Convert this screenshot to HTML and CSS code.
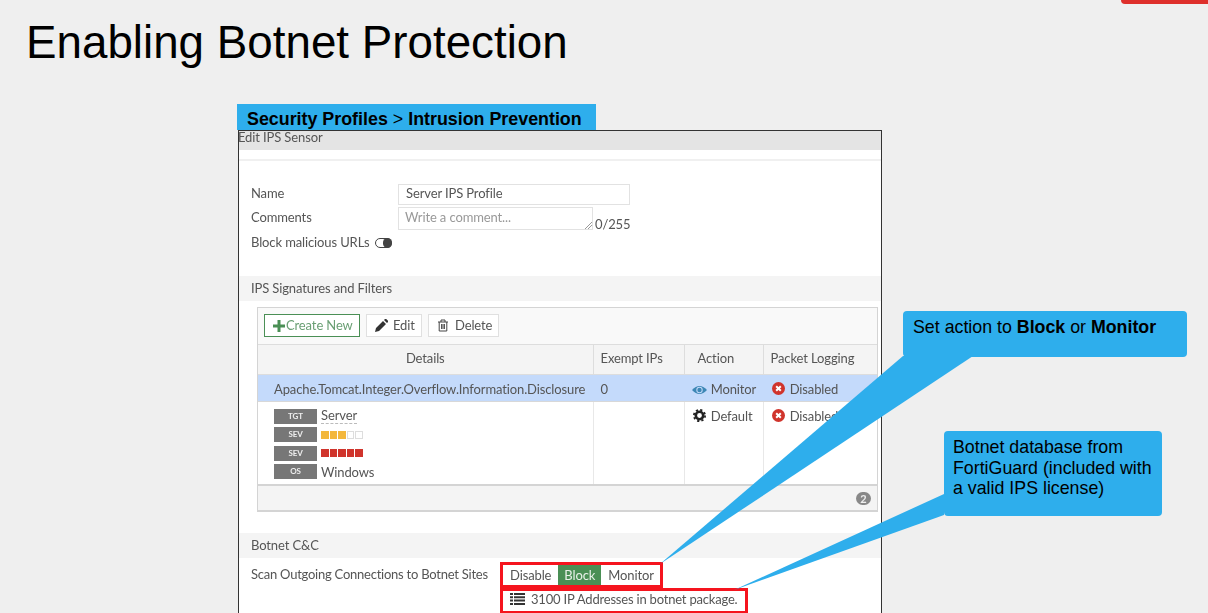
FILE: index.html
```html
<!DOCTYPE html>
<html lang="en">
<head>
  <meta charset="UTF-8">
  <meta name="viewport" content="width=device-width, initial-scale=1.0">
  <title>Enabling Botnet Protection</title>
  <link rel="stylesheet" href="styles.css">
</head>
<body>
  <div class="slide">
    <div class="corner-tab"></div>
    <h1 class="slide-title">Enabling Botnet Protection</h1>
    <div class="path-tab"><b>Security Profiles</b> &gt; <b>Intrusion Prevention</b></div>

    <div class="window">
      <div class="window-head">Edit IPS Sensor</div>
      <div class="window-rule"></div>

      <div class="fields">
        <label class="field-label">Name</label>
        <div class="name-input">Server IPS Profile</div>
        <label class="field-label">Comments</label>
        <div class="comment-row">
          <div class="comment-input">Write a comment...
            <svg class="grip" width="8" height="8" viewBox="0 0 8 8"><path d="M1 8L8 1M4 8L8 4" stroke="#999" fill="none"/></svg>
          </div>
          <span class="counter">0/255</span>
        </div>
        <div class="toggle-row">
          <span>Block malicious URLs</span>
          <span class="toggle"><span class="toggle-knob"></span></span>
        </div>
      </div>

      <div class="section">IPS Signatures and Filters</div>

      <div class="panel">
        <div class="toolbar">
          <span class="btn btn-create">
            <svg width="12" height="12" viewBox="0 0 12 12"><path d="M4.500 0h3v4.500H12v3H7.500V12h-3V7.500H0v-3h4.500z" fill="#4a8f55"/></svg>
            Create New
          </span>
          <span class="btn btn-edit">
            <svg width="13" height="13" viewBox="0 0 13 13"><path d="M0 13l1-4 7-7 3 3-7 7zM9 1l1-1q.6-.4 1.200 0l1.800 1.800q.4.6 0 1.200l-1 1z" fill="#333"/></svg>
            Edit
          </span>
          <span class="btn btn-delete">
            <svg width="12" height="13" viewBox="0 0 12 13"><path d="M1 3h10M4 3V1h4v2M2.200 3v9h7.600V3M4.600 5v5M6 5v5M7.400 5v5" stroke="#444" fill="none"/></svg>
            Delete
          </span>
        </div>

        <table class="sensors">
          <thead>
            <tr>
              <th class="col-details">Details</th>
              <th class="col-exempt">Exempt IPs</th>
              <th class="col-action">Action</th>
              <th class="col-log">Packet Logging</th>
            </tr>
          </thead>
          <tbody>
            <tr class="selected">
              <td class="sig-name">Apache.Tomcat.Integer.Overflow.Information.Disclosure</td>
              <td>0</td>
              <td>
                <svg class="ico" width="15" height="10" viewBox="0 0 15 10"><path d="M0 5Q7.500-3 15 5Q7.500 13 0 5z" fill="#3d87b5"/><circle cx="7.500" cy="5" r="3.200" fill="#c4dafb"/><circle cx="7.500" cy="5" r="2.200" fill="#3d87b5"/></svg>
                Monitor
              </td>
              <td class="log-cell">
                <svg class="ico" width="13" height="13" viewBox="0 0 13 13"><circle cx="6.500" cy="6.500" r="6.500" fill="#d0342c"/><path d="M4.200 4.200l4.600 4.600M8.800 4.200l-4.600 4.600" stroke="#fff" stroke-width="2"/></svg>
                Disabled
              </td>
            </tr>
            <tr class="detail">
              <td>
                <div class="tag-row"><span class="tag">TGT</span><span class="dotted">Server</span></div>
                <div class="tag-row">
                  <span class="tag">SEV</span>
                  <span class="sev sev-amber"><i></i><i></i><i></i><i class="off"></i><i class="off"></i></span>
                </div>
                <div class="tag-row">
                  <span class="tag">SEV</span>
                  <span class="sev sev-red"><i></i><i></i><i></i><i></i><i></i></span>
                </div>
                <div class="tag-row"><span class="tag">OS</span><span>Windows</span></div>
              </td>
              <td></td>
              <td class="default-cell">
                <svg class="ico" width="13" height="13" viewBox="0 0 13 13"><circle cx="6.500" cy="6.500" r="3.700" fill="none" stroke="#222" stroke-width="2.600"/><circle cx="6.500" cy="6.500" r="5.600" fill="none" stroke="#222" stroke-width="1.800" stroke-dasharray="2.200 2.200"/></svg>
                Default
              </td>
              <td class="log-cell">
                <svg class="ico" width="13" height="13" viewBox="0 0 13 13"><circle cx="6.500" cy="6.500" r="6.500" fill="#d0342c"/><path d="M4.200 4.200l4.600 4.600M8.800 4.200l-4.600 4.600" stroke="#fff" stroke-width="2"/></svg>
                Disabled
              </td>
            </tr>
          </tbody>
        </table>
        <div class="panel-foot"><span class="count">2</span></div>
      </div>

      <div class="section section-botnet">Botnet C&amp;C</div>

      <div class="botnet-row">
        <span class="botnet-label">Scan Outgoing Connections to Botnet Sites</span>
        <div class="botnet-controls">
          <div class="red-box segs">
            <span>Disable</span><span class="seg-on">Block</span><span>Monitor</span>
          </div>
          <div class="red-box package">
            <svg width="15" height="12" viewBox="0 0 15 12"><path d="M0 0h3v2H0zM4 0h11v2H4zM0 3.300h3v2H0zM4 3.300h11v2H4zM0 6.600h3v2H0zM4 6.600h11v2H4zM0 10h3v2H0zM4 10h11v2H4z" fill="#333"/></svg>
            3100 IP Addresses in botnet package.
          </div>
        </div>
      </div>
    </div>

    <svg class="tails" width="1208" height="613" viewBox="0 0 1208 613">
      <polygon points="903,356 660,564 973,356" fill="#2eaeec"/>
      <polygon points="944,494 734,590 944,515" fill="#2eaeec"/>
    </svg>
    <div class="callout callout-action">Set action to <b>Block</b> or <b>Monitor</b></div>
    <div class="callout callout-db">Botnet database from FortiGuard (included with a valid IPS license)</div>
  </div>
</body>
</html>
```

FILE: styles.css
```css
body {
  margin: 0;
  background-color: #efefef;
  font-family: "Liberation Sans", Arial, sans-serif;
  color: #000;
}
.slide {
  position: relative;
  width: 1208px;
  height: 613px;
  overflow: hidden;
}
.corner-tab {
  height: 4px;
  margin-left: 1121px;
  background: #de2f2b;
  border-bottom-left-radius: 10px;
}
.slide-title {
  margin: 12px 0 0 26px;
  height: 88px;
  font-size: 45.750px;
  font-weight: normal;
  line-height: 53px;
}
.path-tab {
  margin-left: 237px;
  width: 349px;
  height: 26px;
  padding-left: 10px;
  background: #2eaeec;
  font-size: 17.850px;
  line-height: 31px;
}

/* the pasted FortiGate screenshot, soft like the scaled original */
.window {
  margin-left: 238px;
  width: 642px;
  height: 490px;
  border: 1px solid #333;
  border-bottom: none;
  background: #fff;
  font-family: Lato, sans-serif;
  font-size: 13px;
  letter-spacing: -0.12px;
  color: #555;
  filter: blur(0.3px);
}
.window-head {
  height: 19px;
  background: #e4e4e4;
  line-height: 12px;
  text-indent: -1px;
}
.window-rule {
  height: 2px;
  margin-top: 9px;
  background: #f0f0f0;
}
.fields {
  display: grid;
  grid-template-columns: 147px 1fr;
  grid-template-rows: 23px 24px 24px;
  align-items: start;
  padding: 22px 0 0 12px;
  height: 93px;
}
.field-label {
  line-height: 22px;
}
.field-label:first-child {
  line-height: 20px;
}
.name-input {
  width: 223px;
  height: 19px;
  margin-top: 1px;
  padding-left: 7px;
  border: 1px solid #e2e2e2;
  line-height: 17px;
}
.comment-row {
  display: flex;
  align-items: flex-end;
  gap: 2px;
}
.comment-input {
  position: relative;
  width: 187px;
  height: 21px;
  margin-top: 1px;
  padding-left: 6px;
  border: 1px solid #e2e2e2;
  line-height: 18px;
  color: #999;
}
.grip {
  position: absolute;
  right: 0;
  bottom: 0;
}
.counter {
  line-height: 12px;
}
.toggle-row {
  grid-column: 1 / 3;
  display: flex;
  align-items: center;
  gap: 5px;
  height: 24px;
}
.toggle {
  display: block;
  width: 17px;
  height: 10px;
  box-sizing: border-box;
  border-radius: 5px;
  background: #fff;
  border: 1px solid #444;
  position: relative;
  top: 1px;
}
.toggle-knob {
  display: block;
  width: 9px;
  height: 10px;
  margin: -1px -1px 0 auto;
  border-radius: 5px;
  background: #444;
}
.section {
  height: 25px;
  padding-left: 12px;
  background: #f4f4f4;
  line-height: 24px;
}
.panel {
  margin: 6px 3px 0 18px;
  border: 1px solid #d4d4d4;
  border-bottom-width: 2px;
}
.toolbar {
  display: flex;
  gap: 6px;
  align-items: flex-start;
  box-sizing: border-box;
  height: 36px;
  padding: 6px 0 0 6px;
  background: #f9f9f9;
}
.btn {
  display: flex;
  align-items: center;
  box-sizing: border-box;
  gap: 6px;
  height: 23px;
  padding: 0 0 2px 8px;
  border: 1px solid #e0e0e0;
  background: #fff;
}
.btn svg {
  margin-top: 2px;
}
.btn-create {
  width: 96px;
  gap: 1px;
  border-color: #4a8f55;
  color: #6a9f74;
}
.btn-edit { width: 56px; gap: 5px; }
.btn-delete { width: 71px; }
.sensors {
  width: 100%;
  table-layout: fixed;
  border-collapse: collapse;
}
.sensors th {
  box-sizing: border-box;
  height: 30px;
  padding: 0 0 4px 7px;
  background: #f4f4f4;
  border: 1px solid #ddd;
  border-left: none;
  font-weight: normal;
  text-align: left;
}
.sensors th:last-child,
.sensors td:last-child {
  border-right: none;
}
.sensors .col-details {
  width: 335px;
  padding-left: 0;
  text-align: center;
}
.col-exempt { width: 91px; }
.col-action { width: 79px; }
.sensors .col-action { padding-left: 13px; }
.sensors td {
  padding: 0 0 0 7px;
  border-right: 1px solid #e8e8e8;
}
.sensors .selected td {
  height: 24px;
  padding-top: 2px;
  background: #c4dafb;
  border-bottom: 1px solid #d8d8d8;
  border-right-color: #c4dafb;
}
.sensors .selected .sig-name {
  padding-left: 16px;
  white-space: nowrap;
}
.sensors .detail td {
  height: 76px;
  vertical-align: top;
  padding-top: 6px;
}
.sensors .detail td:first-child {
  padding: 5px 0 0 16px;
}
.sensors .selected .log-cell,
.sensors .detail .log-cell {
  padding-left: 8px;
}
.log-cell .ico {
  margin-right: 2px;
}
.sensors .detail .default-cell {
  padding-left: 8px;
}
.default-cell .ico {
  margin-right: 2px;
}
.detail {
  border-bottom: 2px solid #d4d4d4;
}
.ico {
  margin-right: 1px;
  vertical-align: -1px;
}
.tag-row {
  display: flex;
  align-items: center;
  gap: 4px;
  height: 18.500px;
}
.tag {
  width: 43px;
  height: 15px;
  background: #777;
  color: #eee;
  font-size: 8px;
  font-weight: bold;
  line-height: 15px;
  text-align: center;
}
.dotted {
  border-bottom: 1px dashed #bbb;
  line-height: 15px;
}
.sev {
  display: flex;
  gap: 1px;
}
.sev i {
  width: 7.500px;
  height: 8px;
}
.sev-amber i { background: #f3b73c; }
.sev-amber i.off {
  background: #fff;
  outline: 1px solid #ddd;
  outline-offset: -1px;
}
.sev-red i { background: #d0342c; }
.panel-foot {
  display: flex;
  justify-content: flex-end;
  align-items: center;
  height: 24px;
  padding-right: 6px;
  background: #f4f4f4;
}
.count {
  width: 15px;
  height: 13px;
  border-radius: 7px;
  background: #888;
  color: #eee;
  font-size: 11px;
  font-weight: bold;
  line-height: 13px;
  text-align: center;
}
.section-botnet {
  margin-top: 21px;
}
.botnet-row {
  display: flex;
  padding: 4px 0 0 12px;
}
.botnet-label {
  width: 249px;
  line-height: 24px;
  letter-spacing: -0.24px;
  white-space: nowrap;
}
.red-box {
  box-sizing: border-box;
  height: 26px;
  border: 3px solid #f5141e;
  color: #555;
  line-height: 20px;
  white-space: nowrap;
}
.segs {
  display: flex;
  width: 163px;
}
.segs span {
  padding: 0 7px;
}
.segs .seg-on {
  padding: 0 6px;
  background: #4a8f55;
  color: #e8f0e8;
}
.package {
  display: flex;
  align-items: center;
  gap: 6px;
  width: 248px;
  padding: 0 0 4px 7px;
  letter-spacing: -0.2px;
}

/* slide annotations drawn over the screenshot */
.tails {
  position: absolute;
  left: 0;
  top: 0;
}
.callout {
  position: absolute;
  box-sizing: border-box;
  background: #2eaeec;
  border-radius: 4px;
  font-size: 17.800px;
  color: #000;
}
.callout-action {
  left: 903px;
  top: 311px;
  width: 284px;
  height: 46px;
  padding: 6px 10px;
}
.callout-db {
  left: 944px;
  top: 431px;
  width: 218px;
  height: 85px;
  padding: 6px 9px;
  line-height: 20.500px;
}
```
